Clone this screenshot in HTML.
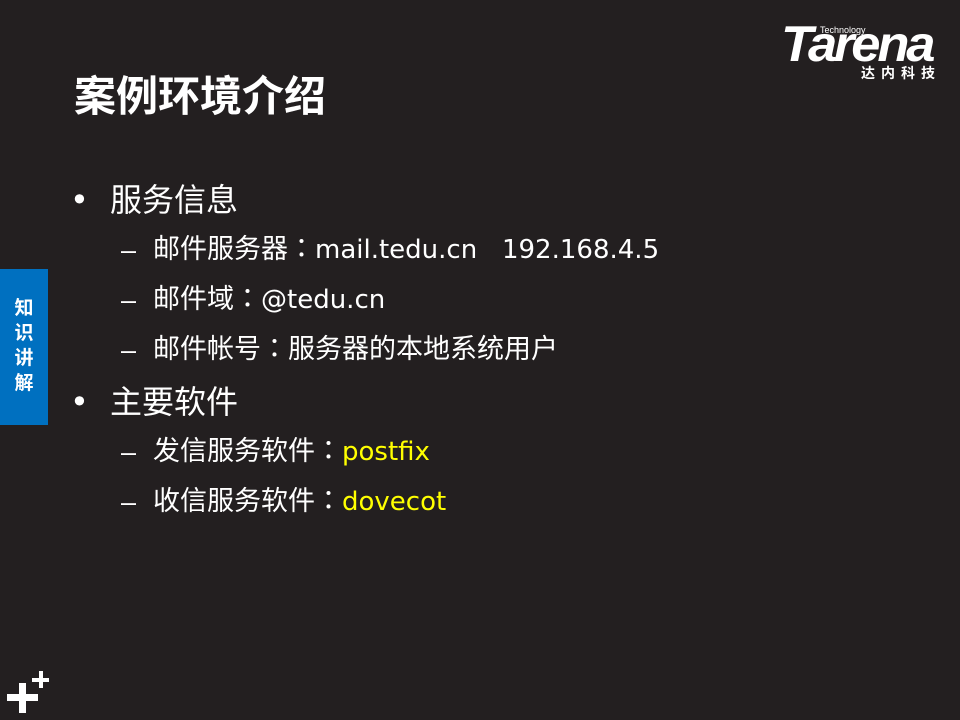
<!DOCTYPE html>
<html><head><meta charset="utf-8"><style>
body{margin:0;width:960px;height:720px;background:#231f20;overflow:hidden;position:relative;font-family:"DejaVu Sans","Noto Sans CJK SC",sans-serif;color:#fff}
.a{position:absolute;white-space:nowrap}
.t{left:74px;top:72px;font-size:42px;font-weight:bold;line-height:50px;font-family:"Liberation Sans","Noto Sans CJK SC",sans-serif}
.l1{font-size:32px;line-height:40px}
.l2{font-size:27px;line-height:36px}
.l2 .e{font-size:26px}
.d{font-family:"Liberation Sans",sans-serif}
.c{display:inline-block;width:1em;text-align:center;font-family:"Noto Sans CJK JP",sans-serif}
.y{color:#ffff00}
</style></head><body>
<div class="a t">案例环境介绍</div>
<div class="a l1" style="left:70px;top:180px">•</div>
<div class="a l1" style="left:110px;top:180px">服务信息</div>
<div class="a l2 d" style="left:121px;top:232px">–</div>
<div class="a l2" style="left:153px;top:229px">邮件服务器<span class="c">：</span><span class="e">mail.tedu.cn&nbsp;&nbsp;&nbsp;192.168.4.5</span></div>
<div class="a l2 d" style="left:121px;top:282px">–</div>
<div class="a l2" style="left:153px;top:279px">邮件域<span class="c">：</span><span class="e">@tedu.cn</span></div>
<div class="a l2 d" style="left:121px;top:332px">–</div>
<div class="a l2" style="left:153px;top:329px">邮件帐号<span class="c">：</span>服务器的本地系统用户</div>
<div class="a l1" style="left:70px;top:382px">•</div>
<div class="a l1" style="left:110px;top:382px">主要软件</div>
<div class="a l2 d" style="left:121px;top:434px">–</div>
<div class="a l2" style="left:153px;top:431px">发信服务软件<span class="c">：</span><span class="y e">postfix</span></div>
<div class="a l2 d" style="left:121px;top:484px">–</div>
<div class="a l2" style="left:153px;top:481px">收信服务软件<span class="c">：</span><span class="y e">dovecot</span></div>
<div class="a" style="left:0;top:269px;width:48px;height:156px;background:#0070c0"></div>
<div class="a" style="left:12px;top:296px;width:24px;font-size:19px;font-weight:bold;line-height:25px;white-space:normal;text-align:center">知识讲解</div>
<div class="a" style="left:7px;top:694px;width:31px;height:7px;background:#fff"></div>
<div class="a" style="left:19px;top:683px;width:7px;height:30px;background:#fff"></div>
<div class="a" style="left:32px;top:678px;width:17px;height:4px;background:#fff"></div>
<div class="a" style="left:39px;top:671px;width:4px;height:17px;background:#fff"></div>
<div class="a" style="left:820px;top:25px;font-size:9px;font-family:'Liberation Sans',sans-serif">Technology</div>
<div class="a" style="left:781px;top:22px;font-size:50px;font-weight:bold;font-style:italic;letter-spacing:-3px;line-height:44px;font-family:'Liberation Sans',sans-serif;transform:scaleX(1.05);transform-origin:left">Tarena</div>
<div class="a" style="left:861px;top:63px;font-size:14px;font-weight:bold;letter-spacing:6px;font-family:'Noto Sans CJK SC',sans-serif">达内科技</div>
</body></html>
